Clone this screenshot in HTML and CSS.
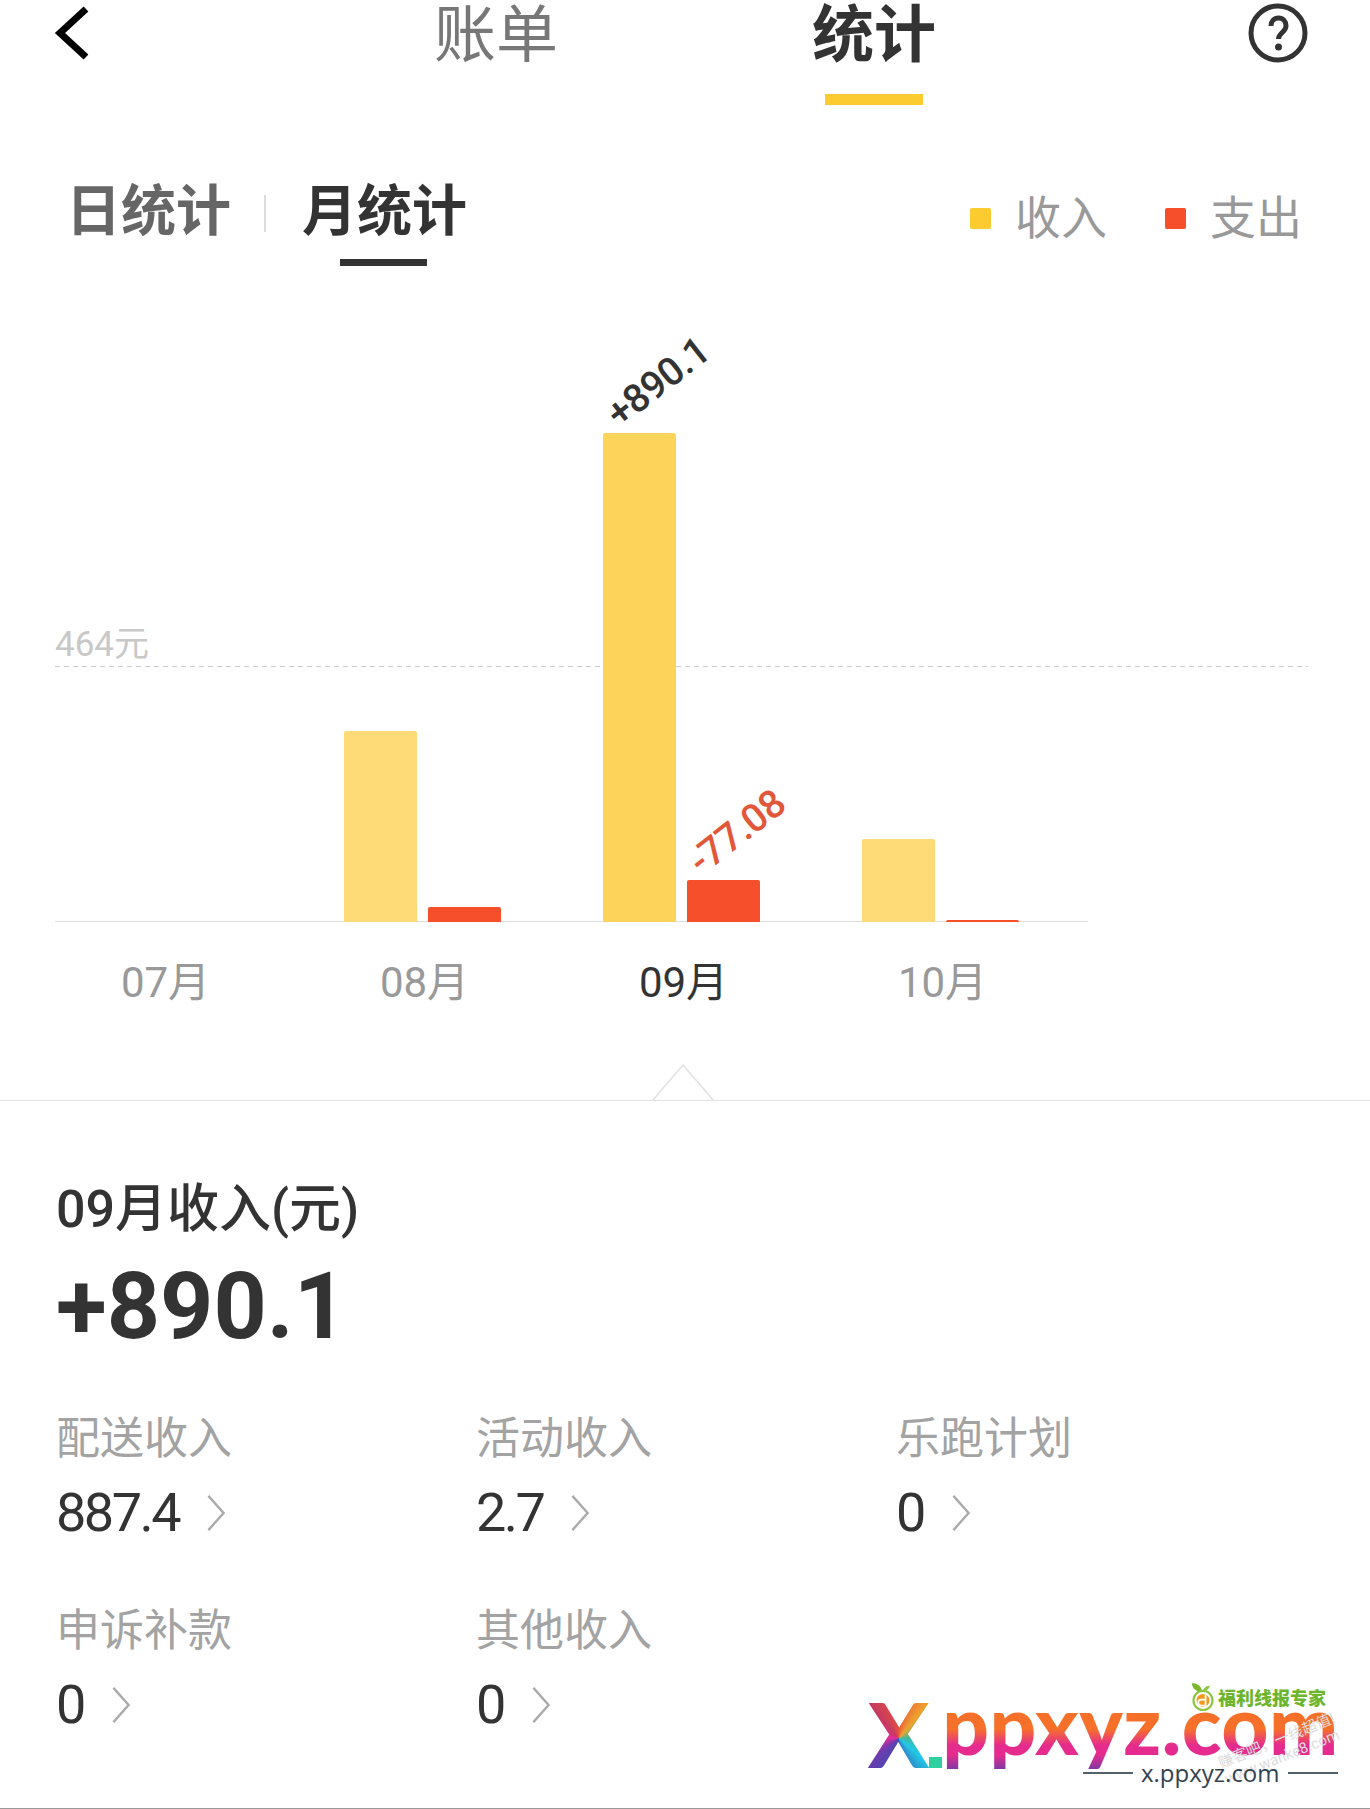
FILE: index.html
```html
<!DOCTYPE html>
<html lang="zh-CN">
<head>
    <meta charset="UTF-8">
    <title>统计</title>
    <link rel="stylesheet" href="styles.css">
</head>
<body>
<div class="page">
    <div class="top">
        <svg class="back" viewBox="0 0 38 54"><path d="M33 3 7 27l26 24" fill="none" stroke="#000" stroke-width="7"/></svg>
        <div class="top-tab">账单</div>
        <div class="top-tab on">统计<span class="top-bar"></span></div>
        <svg class="help" viewBox="0 0 60 60">
            <circle cx="30" cy="30" r="27" fill="none" stroke="#333" stroke-width="5"/>
            <path d="M23 23c0-5 3-8 7.500-8s7.500 3 7.500 8c0 6-7.500 7-7.500 13" fill="none" stroke="#333" stroke-width="5"/>
            <circle cx="30.500" cy="44" r="3.500" fill="#333"/>
        </svg>
    </div>

    <div class="sub">
        <div class="sub-tab">日统计</div>
        <span class="sub-line"></span>
        <div class="sub-tab on">月统计<span class="sub-bar"></span></div>
        <div class="legend">
            <span class="dot yellow"></span><span class="legend-txt">收入</span>
            <span class="dot red"></span><span class="legend-txt">支出</span>
        </div>
    </div>

    <div class="chart">
        <div class="avg-label">464元</div>
        <div class="avg-line"></div>
        <div class="plot">
            <div class="group"></div>
            <div class="group">
                <div class="bar pale" style="height:191px"></div>
                <div class="bar red" style="height:15px"></div>
            </div>
            <div class="group">
                <div class="bar yellow" style="height:489px"><span class="val in">+890.1</span></div>
                <div class="bar red" style="height:42px"><span class="val out">-77.08</span></div>
            </div>
            <div class="group">
                <div class="bar pale" style="height:83px"></div>
                <div class="bar red" style="height:2px"></div>
            </div>
        </div>
        <div class="months">
            <div class="month">07月</div>
            <div class="month">08月</div>
            <div class="month on">09月</div>
            <div class="month">10月</div>
        </div>
    </div>

    <div class="detail">
        <svg class="notch" viewBox="0 0 64 38"><path d="M1 37 32 1l31 36" fill="none" stroke="#e2e2e2" stroke-width="1.500"/></svg>
        <div class="detail-title">09月收入(元)</div>
        <div class="detail-num">+890.1</div>
        <div class="stats">
            <div class="stat">
                <div class="stat-name">配送收入</div>
                <div class="stat-val">887.4<svg class="arrow" viewBox="0 0 20 40"><path d="M2 2l16 18L2 38" fill="none" stroke="#aaa" stroke-width="2.500"/></svg></div>
            </div>
            <div class="stat">
                <div class="stat-name">活动收入</div>
                <div class="stat-val">2.7<svg class="arrow" viewBox="0 0 20 40"><path d="M2 2l16 18L2 38" fill="none" stroke="#aaa" stroke-width="2.500"/></svg></div>
            </div>
            <div class="stat">
                <div class="stat-name">乐跑计划</div>
                <div class="stat-val">0<svg class="arrow" viewBox="0 0 20 40"><path d="M2 2l16 18L2 38" fill="none" stroke="#aaa" stroke-width="2.500"/></svg></div>
            </div>
            <div class="stat">
                <div class="stat-name">申诉补款</div>
                <div class="stat-val">0<svg class="arrow" viewBox="0 0 20 40"><path d="M2 2l16 18L2 38" fill="none" stroke="#aaa" stroke-width="2.500"/></svg></div>
            </div>
            <div class="stat">
                <div class="stat-name">其他收入</div>
                <div class="stat-val">0<svg class="arrow" viewBox="0 0 20 40"><path d="M2 2l16 18L2 38" fill="none" stroke="#aaa" stroke-width="2.500"/></svg></div>
            </div>
        </div>
    </div>

    <!-- watermark over the page -->
    <div class="mark">
        <div class="mark-faint">赚客吧，一线超值!<br>www.wanke8.com</div>
        <div class="mark-logo"><span class="mark-x">X</span><span class="mark-dot"></span><span class="mark-name">ppxyz.com</span></div>
        <div class="mark-top">
            <svg class="mark-icon" viewBox="0 0 30 34">
                <path d="M2 1c7 0 11 3 12 10C8 11 3 8 2 1z" fill="#7ab62e"/>
                <path d="M15 10c1-4 4-6 8-6-1 4-4 6-8 6z" fill="#8cc63f"/>
                <circle cx="15" cy="21" r="11" fill="none" stroke="#8cc63f" stroke-width="2.500"/>
                <circle cx="15" cy="21" r="7.500" fill="#f39a1e"/>
                <path d="M18 14v13h-5a3.500 3.500 0 0 1 0-7h5" fill="none" stroke="#fff" stroke-width="2"/>
            </svg>
            <span class="mark-slogan">福利线报专家</span>
        </div>
        <div class="mark-url"><span class="mark-rule"></span>x.ppxyz.com<span class="mark-rule"></span></div>
    </div>
</div>
</body>
</html>
```

FILE: styles.css
```css
*{
    margin: 0;
    padding: 0;
    box-sizing: border-box;
}
body{
    background: #fff;
    font-family: "Roboto", "Noto Sans CJK SC", sans-serif;
    color: #333;
}
.page{
    width: 1370px;
    height: 1809px;
    position: relative;
    overflow: hidden;
    border-bottom: 1px solid #999;
}

/* top bar */
.top{
    height: 120px;
    display: flex;
    align-items: flex-start;
    padding: 6px 62px 0 53px;
}
.back{
    width: 38px;
    height: 54px;
}
.top-tab{
    width: 124px;
    margin-left: 343px;
    margin-top: -3px;
    display: flex;
    flex-direction: column;
    align-items: center;
    font-size: 62px;
    line-height: 66px;
    color: #777;
}
.top-tab.on{
    margin-left: 254px;
    color: #333;
    font-weight: 700;
}
.top-bar{
    width: 98px;
    height: 11px;
    margin-top: 25px;
    background: #fccb30;
}
.help{
    width: 60px;
    height: 60px;
    margin-left: auto;
    margin-top: -3px;
}

/* day / month switch */
.sub{
    height: 170px;
    display: flex;
    align-items: flex-start;
    padding: 61px 68px 0 66px;
}
.sub-tab{
    width: 165px;
    display: flex;
    flex-direction: column;
    align-items: center;
    font-size: 55px;
    line-height: 60px;
    font-weight: 700;
    color: #666;
}
.sub-tab.on{
    color: #333;
}
.sub-line{
    width: 2px;
    height: 37px;
    margin: 14px 36px 0 33px;
    background: #ddd;
}
.sub-bar{
    width: 87px;
    height: 7px;
    margin: 18px 2px 0 0;
    background: #333;
}
.legend{
    margin-left: auto;
    margin-top: 7px;
    display: flex;
    align-items: center;
    height: 60px;
}
.dot{
    width: 21px;
    height: 21px;
    border-radius: 2px;
}
.legend-txt{
    width: 92px;
    margin: 0 58px 0 24px;
    padding-bottom: 8px;
    font-size: 46px;
    color: #999;
}
.legend-txt:last-child{
    margin-right: 0;
}
.yellow{
    background: #fdd35a;
}
.legend .yellow{
    background: #fccb30;
}
.red{
    background: #f54f2b;
}
.pale{
    background: #fedb76;
}

/* chart */
.chart{
    height: 810px;
    position: relative;
}
.avg-label{
    position: absolute;
    left: 55px;
    top: 335px;
    font-size: 35px;
    line-height: 40px;
    color: #c8c8c8;
}
.avg-line{
    position: absolute;
    left: 55px;
    top: 376px;
    width: 1253px;
    height: 1px;
    background: repeating-linear-gradient(90deg, #ccc 0 5px, transparent 5px 9px);
}
.plot{
    height: 632px;
    display: flex;
    align-items: flex-end;
    padding-left: 34px;
    position: relative;
}
.plot::after{
    content: "";
    position: absolute;
    left: 55px;
    bottom: 0;
    width: 1033px;
    border-bottom: 1px solid #ddd;
}
.group{
    width: 259px;
    height: 100%;
    display: flex;
    align-items: flex-end;
    justify-content: center;
    gap: 11px;
}
.bar{
    width: 73px;
    border-radius: 2px 2px 0 0;
    position: relative;
    z-index: 1;
}
.val{
    position: absolute;
    left: 50%;
    width: 160px;
    text-align: center;
    font-size: 39px;
    line-height: 48px;
    font-weight: 500;
    letter-spacing: -0.500px;
    white-space: nowrap;
    transform: translateX(-50%) rotate(-38deg);
}
.val.in{
    bottom: calc(100% + 27px);
    margin-left: 18px;
    color: #333;
}
.val.out{
    bottom: calc(100% + 24px);
    margin-left: 13px;
    color: #e2573a;
}
.months{
    display: flex;
    padding: 35px 0 0 36px;
}
.month{
    width: 259px;
    text-align: center;
    font-size: 42px;
    line-height: 52px;
    color: #999;
}
.month.on{
    color: #333;
}

/* month detail */
.detail{
    border-top: 1px solid #e2e2e2;
    padding: 84px 0 0 56px;
    position: relative;
}
.notch{
    position: absolute;
    left: 651px;
    top: -37px;
    width: 64px;
    height: 38px;
}
.detail-title{
    font-size: 52px;
    line-height: 50px;
    font-weight: 500;
    color: #333;
}
.detail-num{
    margin-top: 22px;
    font-size: 93px;
    line-height: 100px;
    font-weight: 700;
    color: #333;
}
.stats{
    margin-top: 57px;
    display: grid;
    grid-template-columns: repeat(3, 420px);
    row-gap: 63px;
}
.stat-name{
    font-size: 44px;
    line-height: 50px;
    color: #a3a3a3;
}
.stat-val{
    margin-top: 19px;
    display: flex;
    align-items: center;
    font-size: 54px;
    line-height: 60px;
    letter-spacing: -2.500px;
    color: #333;
}
.arrow{
    width: 20px;
    height: 38px;
    margin-left: 27px;
}

/* watermark */
.mark{
    position: absolute;
    left: 868px;
    top: 1680px;
    width: 480px;
    height: 116px;
}
.mark-logo{
    height: 88px;
    display: flex;
    align-items: flex-end;
    font-family: "Lato", sans-serif;
    white-space: nowrap;
}
.mark-x{
    margin-bottom: -10px;
    font-size: 90px;
    line-height: 90px;
    font-weight: 900;
    background: conic-gradient(from 0deg at 50% 56%, #e8503a 0deg, #eea22e 40deg, #3fb8a0 90deg, #22c8e6 130deg, #3a4fae 180deg, #6a3cb0 230deg, #e42a9c 270deg, #c73a60 320deg, #e8503a 360deg);
    -webkit-background-clip: text;
    background-clip: text;
    color: transparent;
}
.mark-dot{
    width: 13px;
    height: 11px;
    background: #2fcfa0;
}
.mark-name{
    margin-bottom: -5px;
    font-size: 82px;
    line-height: 100px;
    font-weight: 900;
    letter-spacing: 0.500px;
    background: linear-gradient(180deg, #f6702a 56%, #e52c8e 72%, #e52c8e 82%, #7a3aa6 97%);
    -webkit-background-clip: text;
    background-clip: text;
    color: transparent;
}
.mark-top{
    position: absolute;
    left: 322px;
    top: 2px;
    display: flex;
    align-items: flex-end;
    gap: 2px;
}
.mark-icon{
    width: 26px;
    height: 30px;
}
.mark-slogan{
    font-size: 18px;
    line-height: 26px;
    font-weight: 900;
    color: #6db52c;
}
.mark-url{
    position: absolute;
    left: 215px;
    top: 78px;
    display: flex;
    align-items: center;
    gap: 8px;
    font-family: "Open Sans", sans-serif;
    font-size: 24px;
    line-height: 30px;
    color: #33424f;
}
.mark-rule{
    width: 50px;
    border-top: 2px solid #52606c;
}
.mark-faint{
    position: absolute;
    left: 350px;
    top: 52px;
    font-size: 15px;
    line-height: 17px;
    white-space: nowrap;
    color: #ddd;
    transform: rotate(-22deg);
}
```
